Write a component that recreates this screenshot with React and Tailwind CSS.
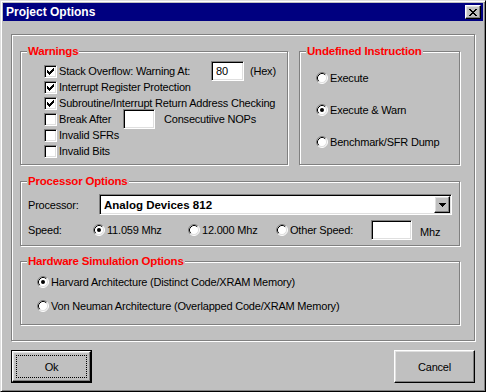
const font = "font-['Liberation_Sans',Arial,sans-serif]";
const sunken =
  "border border-t-[#808080] border-l-[#808080] border-r-white border-b-white shadow-[inset_1px_1px_0_#000,inset_-1px_-1px_0_#dfdfdf] bg-white";
const raised =
  "border border-t-white border-l-white border-r-black border-b-black shadow-[inset_-1px_-1px_0_#808080,inset_1px_1px_0_#dfdfdf] bg-[#c0c0c0]";

function Group({ title, className, children }) {
  return (
    <div className={`relative border border-[#808080] shadow-[inset_1px_1px_0_#fff,1px_1px_0_#fff] ${className}`}>
      <span className="absolute left-[6px] top-[-8px] bg-[#c0c0c0] px-[1px] text-[11.5px] font-bold leading-[14px] text-[#ff0000]">
        {title}
      </span>
      {children}
    </div>
  );
}

function Check({ checked }) {
  return (
    <div className={`w-[13px] h-[13px] shrink-0 ${sunken} flex items-center justify-center`}>
      {checked && (
        <svg width="7" height="7" viewBox="0 0 7 7" shapeRendering="crispEdges">
          <path
            fill="#000"
            d="M0 2h1v3H0z M1 3h1v3H1z M2 4h1v3H2z M3 3h1v3H3z M4 2h1v3H4z M5 1h1v3H5z M6 0h1v3H6z"
          />
        </svg>
      )}
    </div>
  );
}

function Radio({ checked }) {
  return (
    <svg width="12" height="12" viewBox="0 0 12 12" className="shrink-0">
      <circle cx="6" cy="6" r="5" fill="#fff" />
      <path d="M2.11 9.89A5.5 5.5 0 0 1 9.89 2.11" fill="none" stroke="#808080" />
      <path d="M9.89 2.11A5.5 5.5 0 0 1 2.11 9.89" fill="none" stroke="#fff" />
      <path d="M2.82 9.18A4.5 4.5 0 0 1 9.18 2.82" fill="none" stroke="#000" />
      <path d="M9.18 2.82A4.5 4.5 0 0 1 2.82 9.18" fill="none" stroke="#dfdfdf" />
      {checked && <circle cx="6" cy="6" r="2" fill="#000" />}
    </svg>
  );
}

function CheckRow({ checked, children }) {
  return (
    <div className="flex h-[16px] items-center">
      <Check checked={checked} />
      <div className="ml-[2px] flex items-center">{children}</div>
    </div>
  );
}

function RadioRow({ checked, label }) {
  return (
    <div className="flex h-[16px] items-center">
      <Radio checked={checked} />
      <span className="ml-[2px]">{label}</span>
    </div>
  );
}

export default function App() {
  return (
    <div
      className={`${font} w-[486px] h-[392px] bg-[#c0c0c0] p-[2px] text-[11px] tracking-[-0.2px] leading-[14px] text-black border border-t-[#dfdfdf] border-l-[#dfdfdf] border-r-black border-b-black shadow-[inset_1px_1px_0_#fff,inset_-1px_-1px_0_#808080] flex flex-col`}
    >
      {/* title bar */}
      <div className="h-[18px] bg-[#000080] flex items-center justify-between pl-[3px] pr-[2px]">
        <span className="text-white font-bold text-[12px] tracking-normal">Project Options</span>
        <div className={`w-[16px] h-[14px] ${raised} flex items-center justify-center`}>
          <svg width="8" height="7" viewBox="0 0 8 7" shapeRendering="crispEdges">
            <path
              fill="#000"
              d="M0 0h2v1H0z M6 0h2v1H6z M1 1h2v1H1z M5 1h2v1H5z M2 2h4v1H2z M3 3h2v1H3z M2 4h4v1H2z M1 5h2v1H1z M5 5h2v1H5z M0 6h2v1H0z M6 6h2v1H6z"
            />
          </svg>
        </div>
      </div>

      <div className="px-[8px]">
        {/* main etched frame */}
        <div className="mt-[13px] w-[464px] h-[307px] border border-[#808080] shadow-[inset_1px_1px_0_#fff,1px_1px_0_#fff] pl-[8px] pt-[16px]">
          <div className="flex gap-[11px]">
            <Group title="Warnings" className="w-[268px] h-[114px] pl-[23px] pt-[11px]">
              <CheckRow checked>
                <span className="w-[152px]">Stack Overflow: Warning At:</span>
                <div className={`w-[33px] h-[20px] ${sunken} pl-[4px] flex items-center`}>80</div>
                <span className="ml-[6px]">(Hex)</span>
              </CheckRow>
              <CheckRow checked>
                <span>Interrupt Register Protection</span>
              </CheckRow>
              <CheckRow checked>
                <span>Subroutine/Interrupt Return Address Checking</span>
              </CheckRow>
              <CheckRow>
                <span className="w-[64px]">Break After</span>
                <div className={`w-[32px] h-[20px] ${sunken}`} />
                <span className="ml-[9px]">Consecutiive NOPs</span>
              </CheckRow>
              <CheckRow>
                <span>Invalid SFRs</span>
              </CheckRow>
              <CheckRow>
                <span>Invalid Bits</span>
              </CheckRow>
            </Group>

            <Group title="Undefined Instruction" className="w-[161px] h-[114px] pl-[16px] pt-[18px] flex flex-col gap-[16px]">
              <RadioRow label="Execute" />
              <RadioRow checked label="Execute & Warn" />
              <RadioRow label="Benchmark/SFR Dump" />
            </Group>
          </div>

          <Group title="Processor Options" className="mt-[16px] w-[440px] h-[65px] pl-[7px] pt-[12px]">
            <div className="flex items-center">
              <span className="w-[71px]">Processor:</span>
              <div className={`w-[353px] h-[21px] ${sunken} flex items-center justify-between pl-[4px] pr-[1px]`}>
                <span className="font-bold text-[11.5px] tracking-normal">Analog Devices 812</span>
                <div className={`w-[16px] h-[17px] ${raised} flex items-center justify-center`}>
                  <svg width="7" height="4" viewBox="0 0 7 4" shapeRendering="crispEdges">
                    <path fill="#000" d="M0 0h7v1H0z M1 1h5v1H1z M2 2h3v1H2z M3 3h1v1H3z" />
                  </svg>
                </div>
              </div>
            </div>
            <div className="mt-[5px] h-[20px] flex items-center">
              <span className="w-[65px]">Speed:</span>
              <div className="w-[95px] flex items-center">
                <Radio checked />
                <span className="ml-[2px]">11.059 Mhz</span>
              </div>
              <div className="w-[88px] flex items-center">
                <Radio />
                <span className="ml-[2px]">12.000 Mhz</span>
              </div>
              <div className="flex items-center">
                <Radio />
                <span className="ml-[2px] w-[81px]">Other Speed:</span>
              </div>
              <div className={`w-[41px] h-[20px] ${sunken}`} />
              <span className="ml-[8px] mt-[4px]">Mhz</span>
            </div>
          </Group>

          <Group title="Hardware Simulation Options" className="mt-[15px] w-[440px] h-[64px] pl-[16px] pt-[12px] flex flex-col gap-[8px]">
            <RadioRow checked label="Harvard Architecture (Distinct Code/XRAM Memory)" />
            <RadioRow label="Von Neuman Architecture (Overlapped Code/XRAM Memory)" />
          </Group>
        </div>

        {/* buttons */}
        <div className="mt-[9px] flex justify-between">
          <button className="w-[81px] h-[33px] border border-black p-0">
            <div className={`w-full h-full ${raised} p-[3px]`}>
              <div className="w-full h-full border border-dotted border-black flex items-center justify-center">
                Ok
              </div>
            </div>
          </button>
          <button className={`w-[81px] h-[33px] ${raised} flex items-center justify-center`}>Cancel</button>
        </div>
      </div>
    </div>
  );
}
